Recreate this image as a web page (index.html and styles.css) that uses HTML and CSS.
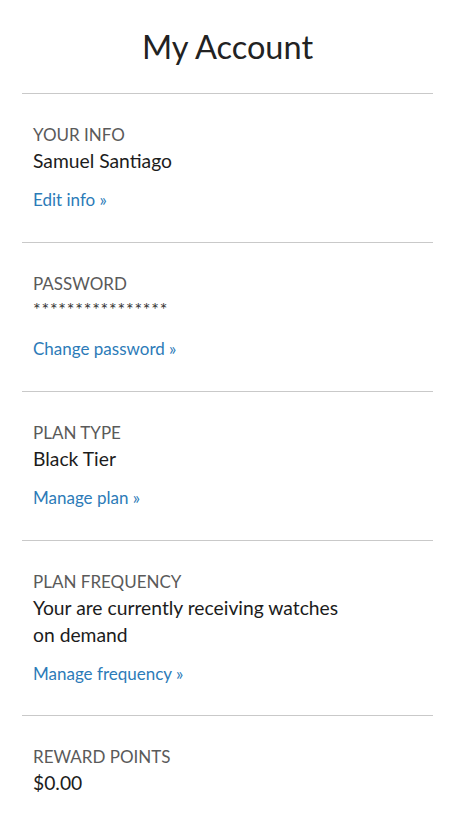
FILE: index.html
```html
<!DOCTYPE html>
<html lang="en">
<head>
<meta charset="utf-8">
<title>My Account</title>
<link rel="stylesheet" href="styles.css">
</head>
<body>
<main class="page">
  <header class="header">
    <h1 class="title">My Account</h1>
  </header>
  <section class="section">
    <div class="label">YOUR INFO</div>
    <div class="value">Samuel Santiago</div>
    <a class="link" href="#">Edit info »</a>
  </section>
  <section class="section">
    <div class="label">PASSWORD</div>
    <div class="value stars">****************</div>
    <a class="link" href="#">Change password »</a>
  </section>
  <section class="section">
    <div class="label">PLAN TYPE</div>
    <div class="value">Black Tier</div>
    <a class="link" href="#">Manage plan »</a>
  </section>
  <section class="section">
    <div class="label">PLAN FREQUENCY</div>
    <div class="value narrow">Your are currently receiving watches on demand</div>
    <a class="link" href="#">Manage frequency »</a>
  </section>
  <section class="section">
    <div class="label">REWARD POINTS</div>
    <div class="value">$0.00</div>
  </section>
</main>
</body>
</html>
```

FILE: styles.css
```css
* { box-sizing: border-box; }
html, body { margin: 0; padding: 0; background: #fff; }
body {
  font-family: Lato, "Open Sans", "Liberation Sans", sans-serif;
  color: #1f1f1f;
}
.page {
  padding: 0 21px 0 22px;
}
.header {
  height: 93px;
  display: flex;
  align-items: center;
  justify-content: center;
}
.title {
  margin: 0;
  font-size: 32.5px;
  font-weight: 400;
  color: #222;
  line-height: 40px;
}
.section {
  border-top: 1px solid #c9c9c9;
  padding: 29px 11px 30px 11px;
  display: flex;
  flex-direction: column;
  align-items: flex-start;
}
.section:nth-child(5) {
  padding-bottom: 29px;
}
.label {
  font-size: 17px;
  line-height: 24px;
  color: #5a5a5a;
}
.value {
  font-size: 19.3px;
  line-height: 27px;
  color: #1c1c1c;
}
.narrow { max-width: 315px; }
.stars {
  font-size: 18px;
  letter-spacing: 0.8px;
  color: #333;
}
.link {
  margin-top: 14px;
  font-size: 17px;
  line-height: 24px;
  color: #2c7bb8;
  text-decoration: none;
}
```
